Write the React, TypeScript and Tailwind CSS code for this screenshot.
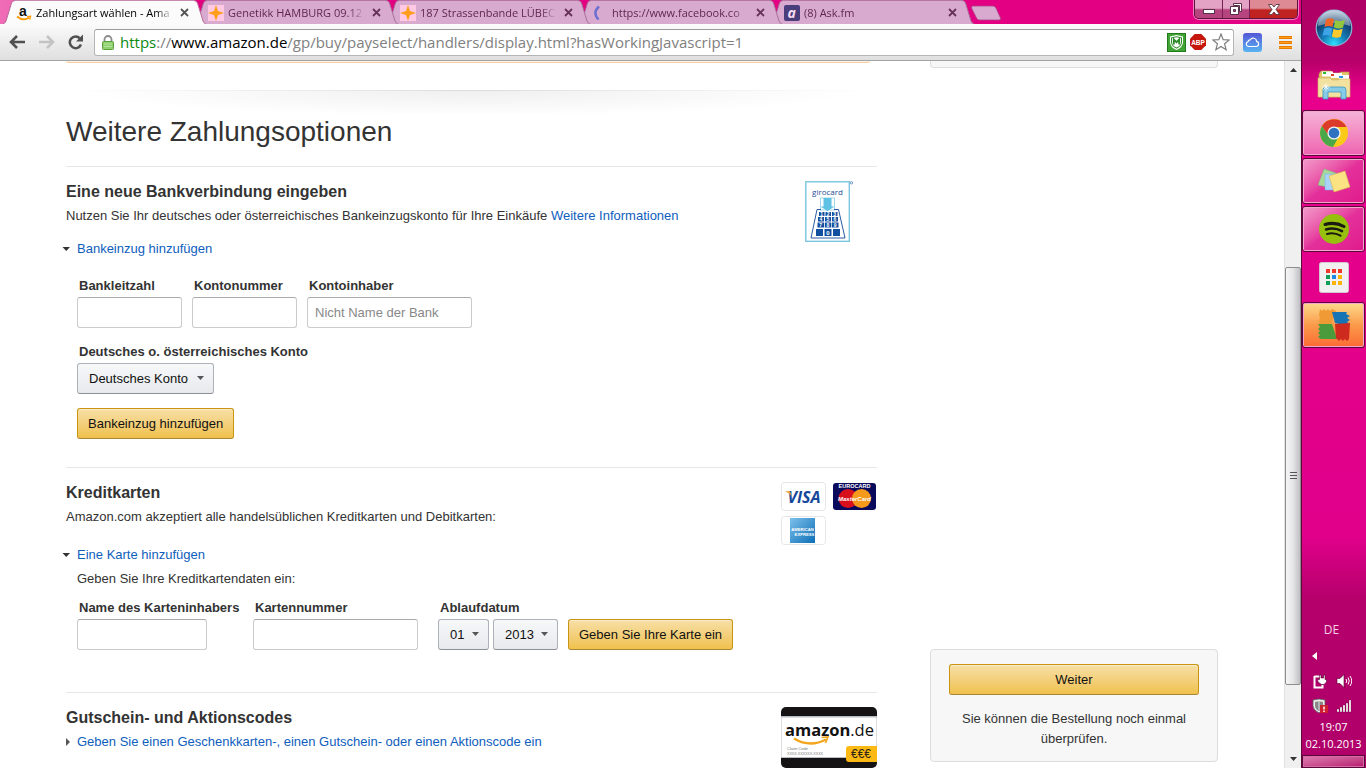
import React from 'react'

type TabItem = {
  title: string
  icon: React.ReactNode
  layer: string
  active?: boolean
}

const GOLD_BUTTON =
  'h-[31px] rounded-[3px] border border-[#c89411] border-b-[#a88734] bg-linear-to-b from-[#f7dfa5] to-[#f0c14b] px-[10px] text-[13px] text-[#111] shadow-[inset_0_1px_0_rgba(255,255,255,0.4)]'

const INPUT =
  'h-[31px] rounded-[3px] border border-[#ccc] border-t-[#aaa] bg-white px-[7px] text-[13px] text-[#333] outline-none placeholder:text-[#888]'

/* ---------- Browser ---------- */

const StarFavicon = () => (
  <svg viewBox="0 0 16 16" className="size-4 shrink-0 bg-[#ffc9e4]">
    <path d="M8 0 10 6 16 8 10 10 8 16 6 10 0 8 6 6Z" fill="#ff9e1b" />
  </svg>
)

const AmazonFavicon = () => (
  <svg viewBox="0 0 16 16" className="size-4 shrink-0 overflow-visible">
    <text x="3" y="10.500" fontSize="14" fontWeight="700" fontFamily="Liberation Sans, sans-serif" fill="#111">
      a
    </text>
    <path d="M1 11.5Q7 16.5 13 12.8" fill="none" stroke="#ff9900" strokeWidth="1.7" />
    <path d="M11 11.6 14.6 11.3 13.6 14.6" fill="none" stroke="#ff9900" strokeWidth="1.3" />
  </svg>
)

const LoadingFavicon = () => (
  <svg viewBox="0 0 16 16" className="size-4 shrink-0">
    <path d="M7 1.5Q0 7.500 6.500 14.500" fill="none" stroke="#6a6fd0" strokeWidth="2.400" />
  </svg>
)

const AskFavicon = () => (
  <svg viewBox="0 0 16 16" className="size-4 shrink-0 overflow-visible">
    <rect width="16" height="16" rx="2" fill="#4a3d7c" />
    <text x="3.500" y="12.500" fontSize="14" fontWeight="700" fontStyle="italic" fontFamily="Open Sans, sans-serif" fill="#f3dcec">
      a
    </text>
  </svg>
)

const tabs: TabItem[] = [
  { title: 'Zahlungsart wählen - Ama', icon: <AmazonFavicon />, layer: 'z-50', active: true },
  { title: 'Genetikk HAMBURG 09.12', icon: <StarFavicon />, layer: 'z-40' },
  { title: '187 Strassenbande LÜBEC', icon: <StarFavicon />, layer: 'z-30' },
  { title: 'https://www.facebook.co', icon: <LoadingFavicon />, layer: 'z-20' },
  { title: '(8) Ask.fm', icon: <AskFavicon />, layer: 'z-10' },
]

const TabEdge = ({ active, flip }: { active?: boolean; flip?: boolean }) => (
  <svg viewBox="0 0 12 24" className={flip ? 'h-6 w-3 shrink-0 -scale-x-100' : 'h-6 w-3 shrink-0'}>
    <path d="M0 24Q2 23.500 3 21L8.500 3Q9.500 .5 12 .5V24Z" fill={active ? '#fbfbfb' : '#d9aad0'} />
    <path d="M0 24Q2 23.500 3 21L8.500 3Q9.500 .5 12 .5" fill="none" stroke={active ? '#b9699a' : '#a8709a'} />
  </svg>
)

const Tab = ({ title, icon, layer, active }: TabItem) => (
  <div className={`relative -ml-[11px] flex h-6 ${layer}`}>
    <TabEdge active={active} />
    <div
      className={`flex w-[179px] items-center border-t pr-[5px] pl-px ${
        active ? 'border-[#c98ab0] bg-[#fbfbfb] text-black' : 'border-[#b676a4] bg-[#d9aad0] text-[#5f2750]'
      }`}
    >
      {icon}
      <span className="ml-1 flex-1 text-[11px] leading-5 whitespace-nowrap [mask-image:linear-gradient(to_right,black_88%,transparent)]">
        {title}
      </span>
      <button aria-label="Tab schließen" className="ml-[7px]">
        <svg viewBox="0 0 9 9" className="size-[9px]">
          <path d="M1 1 8 8M8 1 1 8" stroke={active ? '#555' : '#68315a'} strokeWidth="1.800" />
        </svg>
      </button>
    </div>
    <TabEdge active={active} flip />
  </div>
)

const WindowControls = () => (
  <div className="mr-[3px] flex h-[19px] overflow-hidden rounded-b-[5px] border border-t-0 border-[#5d1540] shadow-[0_0_0_1px_#f27fbd]">
    <button
      aria-label="Minimieren"
      className="flex w-7 items-center justify-center border-r border-[#7a1f55] bg-linear-to-b from-[#e3a3c5] from-45% to-[#b5447f] to-55%"
    >
      <svg viewBox="0 0 12 5" className="mt-1 h-[5px] w-3">
        <rect x=".5" y=".5" width="11" height="4" fill="#fff" stroke="#55324a" />
      </svg>
    </button>
    <button
      aria-label="Verkleinern"
      className="flex w-[27px] items-center justify-center border-r border-[#7a1f55] bg-linear-to-b from-[#e3a3c5] from-45% to-[#b5447f] to-55%"
    >
      <svg viewBox="0 0 12 12" className="size-3">
        <path d="M3.500 .5h8v8h-2v-6h-6z" fill="#fff" stroke="#55324a" />
        <path d="M.5 3.500h8v8h-8zM3.500 6.500v2h2v-2z" fill="#fff" fillRule="evenodd" stroke="#55324a" />
      </svg>
    </button>
    <button
      aria-label="Schließen"
      className="flex w-[47px] items-center justify-center bg-linear-to-b from-[#dd8a94] from-45% to-[#c02222] to-55%"
    >
      <svg viewBox="0 0 12 11" className="h-[11px] w-3">
        <path
          d="M.5 .5h3.500L6 3 8 .5h3.500L8 5.500l3.500 5H8L6 8l-2 2.500H.5l3.500-5z"
          fill="#fff"
          stroke="#5a3a44"
          strokeWidth=".9"
        />
      </svg>
    </button>
  </div>
)

const TabStrip = () => (
  <header className="flex h-6 items-start bg-linear-to-r from-[#f06cb6] via-[#e2007f] via-15% to-[#e40084] pl-[14px]">
    {tabs.map((tab) => (
      <Tab key={tab.title} {...tab} />
    ))}
    <button aria-label="Neuer Tab" className="mt-[5px] -ml-1">
      <svg viewBox="0 0 32 16" className="h-4 w-8">
        <path
          d="M3 1H23Q25 1 26 3L30.500 13Q31 15 29 15H9Q7.500 15 6.500 13L1.500 3Q1 1 3 1Z"
          fill="#d9aad0"
          stroke="#a84385"
          strokeWidth=".8"
        />
      </svg>
    </button>
    <div className="flex-1" />
    <WindowControls />
  </header>
)

const Toolbar = () => (
  <div className="flex h-[37px] items-center border-b border-[#a3a3a3] bg-linear-to-b from-[#fbfbfb] to-[#dfdfdf] pl-[9px]">
    <button aria-label="Zurück">
      <svg viewBox="0 0 16 14" className="h-[14px] w-4">
        <path d="M8 1 2 7l6 6M2.500 7H16" fill="none" stroke="#505050" strokeWidth="2.600" />
      </svg>
    </button>
    <button aria-label="Vorwärts" className="ml-[14px]">
      <svg viewBox="0 0 16 14" className="h-[14px] w-4">
        <path d="M8 1l6 6-6 6M13.500 7H0" fill="none" stroke="#c3c3c3" strokeWidth="2.600" />
      </svg>
    </button>
    <button aria-label="Neu laden" className="ml-3">
      <svg viewBox="0 0 17 16" className="h-4 w-[17px]">
        <path d="M13 4.500A5.800 5.800 0 1 0 14 10.500" fill="none" stroke="#505050" strokeWidth="2.500" />
        <path d="M16 .5V7.500H9Z" fill="#505050" />
      </svg>
    </button>
    <div className="ml-[10px] flex h-[27px] flex-1 items-center rounded-[3px] border border-[#b5b5b5] border-t-[#9a9a9a] bg-white pr-[3px] pl-[7px]">
      <svg viewBox="0 0 12 15" className="h-[15px] w-3">
        <path d="M2.500 7V4.500a3.500 3.500 0 0 1 7 0V7" fill="none" stroke="#8b8b8b" strokeWidth="1.800" />
        <rect x=".5" y="6.500" width="11" height="8" rx="1" fill="#8fd06f" stroke="#5ba03c" />
        <path d="M2 9h8M2 11.500h8" stroke="#b5e39c" />
      </svg>
      <span className="ml-[6px] flex-1 text-[15px] leading-6 whitespace-nowrap text-[#808080]">
        <span className="text-[#0b8a12]">https</span>://<span className="text-black">www.amazon.de</span>
        /gp/buy/payselect/handlers/display.html?hasWorkingJavascript=1
      </span>
      <svg viewBox="0 0 19 19" className="size-[19px]">
        <rect x=".5" y=".5" width="18" height="18" fill="#41a535" stroke="#237a1c" />
        <path d="M9.500 2 16 3.500V9q0 5-6.500 8Q3 14 3 9V3.500Z" fill="#fff" />
        <path d="M9.500 3.200 15 4.500V9q0 4.200-5.500 6.700Q4 13.200 4 9V4.500Z" fill="#2d8a28" />
        <path d="M9.500 4.200 14 5.300V9q0 3.500-4.500 5.600Q5 12.500 5 9V5.300Z" fill="#fff" />
        <path d="M6.800 11.500V6.500L9.500 9.200l2.700-2.700v5" fill="none" stroke="#2d8a28" strokeWidth="1.800" />
      </svg>
      <svg viewBox="0 0 16 16" className="ml-1 size-4">
        <path d="M4.700 0h6.600L16 4.700v6.600L11.300 16H4.700L0 11.300V4.700Z" fill="#c6170d" />
        <text x="8" y="10.800" fontSize="6.500" fontWeight="700" textAnchor="middle" fontFamily="Liberation Sans, sans-serif" fill="#fff">
          ABP
        </text>
      </svg>
      <button aria-label="Lesezeichen" className="ml-[6px]">
        <svg viewBox="0 0 18 18" className="size-[18px]">
          <path
            d="M9 1 11.200 6.600 17.200 7 12.600 10.800 14.100 16.700 9 13.400 3.900 16.700 5.400 10.800 .8 7 6.800 6.600Z"
            fill="#fff"
            stroke="#7d7d7d"
            strokeWidth="1.200"
          />
        </svg>
      </button>
    </div>
    <svg viewBox="0 0 19 19" className="ml-[9px] size-[19px]">
      <defs>
        <linearGradient id="cloud" x2="0" y2="1">
          <stop stopColor="#5457d6" />
          <stop offset="1" stopColor="#58b4f2" />
        </linearGradient>
      </defs>
      <rect width="19" height="19" rx="3" fill="url(#cloud)" />
      <path
        d="M5.500 13.500a2.500 2.500 0 0 1-.4-4.900 2 2 0 0 1 2.200-1.800 3.400 3.400 0 0 1 6.300 1.500 2.700 2.700 0 0 1 .2 5.200Z"
        fill="none"
        stroke="#fff"
        strokeWidth="1.200"
      />
    </svg>
    <button aria-label="Menü" className="mr-[9px] ml-[17px]">
      <svg viewBox="0 0 13 13" className="size-[13px]">
        <path d="M0 1.500h13M0 6.500h13M0 11.500h13" stroke="#e87a00" strokeWidth="3" />
        <path d="M0 1.500h13M0 6.500h13M0 11.500h13" stroke="#ff9f1a" />
      </svg>
    </button>
  </div>
)

const Scrollbar = () => (
  <div className="flex w-[17px] shrink-0 flex-col items-center border-l border-[#e2e2e2] bg-[#f0f0f0]">
    <svg viewBox="0 0 7 4" className="my-[7px] h-1 w-[7px]">
      <path d="M0 4 3.500 0 7 4Z" fill="#333" />
    </svg>
    <div className="flex-[189]" />
    <div className="flex w-full flex-[419] items-center justify-center rounded-[2px] border border-[#8e8e8e] bg-linear-to-r from-[#f5f5f5] via-[#e6e6e8] to-[#bfbfc4]">
      <svg viewBox="0 0 7 8" className="h-2 w-[7px]">
        <path d="M0 .5h7M0 3.500h7M0 6.500h7" stroke="#555" />
      </svg>
    </div>
    <div className="flex-[65]" />
    <svg viewBox="0 0 7 4" className="my-[7px] h-1 w-[7px]">
      <path d="M0 0H7L3.500 4Z" fill="#333" />
    </svg>
  </div>
)

/* ---------- Formular ---------- */

const Field = ({
  id,
  label,
  width,
  column = '',
  placeholder,
}: {
  id: string
  label: string
  width: string
  column?: string
  placeholder?: string
}) => (
  <div className={`flex flex-col ${column}`}>
    <label htmlFor={id} className="mb-px pl-0.5 font-bold whitespace-nowrap">
      {label}
    </label>
    <input id={id} type="text" placeholder={placeholder} className={`${INPUT} ${width}`} />
  </div>
)

const Select = ({
  id,
  width,
  options,
  label,
}: {
  id: string
  width: string
  options: string[]
  label?: string
}) => (
  <div className={`relative ${width}`}>
    <select
      id={id}
      aria-label={label}
      className="h-[31px] w-full appearance-none rounded-[3px] border border-[#adb1b8] border-b-[#8d9096] bg-linear-to-b from-[#f7f8fa] to-[#e7e9ec] pl-[11px] text-[13px] text-[#111]"
    >
      {options.map((option) => (
        <option key={option}>{option}</option>
      ))}
    </select>
    <svg viewBox="0 0 7 4" className="pointer-events-none absolute top-[13px] right-[10px] h-1 w-[7px]">
      <path d="M0 0H7L3.500 4Z" fill="#555" />
    </svg>
  </div>
)

const Expander = ({ open, className = '', children }: { open?: boolean; className?: string; children: string }) => (
  <div className={`-ml-1 flex items-center ${className}`}>
    <span className="flex w-[15px] items-center">
      <svg viewBox="0 0 8 8" className="size-2">
        {open ? <path d="M.5 2H8L4.250 6Z" fill="#333" /> : <path d="M4 0V8L8 4Z" fill="#555" />}
      </svg>
    </span>
    <a href="#" className="text-[#0e5ebd]">
      {children}
    </a>
  </div>
)

const Section = ({
  title,
  media,
  className = '',
  children,
}: {
  title: string
  media: React.ReactNode
  className?: string
  children: React.ReactNode
}) => (
  <section className={`flex items-start border-t border-[#e7e7e7] pt-3 ${className}`}>
    <div className="min-w-0 flex-1">
      <h2 className="text-[16px] leading-[26px] font-bold">{title}</h2>
      <div className="mt-px">{children}</div>
    </div>
    {media}
  </section>
)

/* ---------- Kartenlogos ---------- */

const Girocard = () => (
  <svg viewBox="0 0 48 62" className="mt-0.5 mr-6 h-[62px] w-12 shrink-0">
    <rect x=".8" y=".8" width="43.500" height="59.500" fill="#fff" stroke="#7cc6e0" strokeWidth="1.400" />
    <circle cx="46.500" cy="1.800" r="1.200" fill="none" stroke="#4a7fb5" strokeWidth=".8" />
    <text x="22.500" y="13.500" fontSize="8" textAnchor="middle" fontFamily="Open Sans, sans-serif" fill="#1b4b96">
      girocard
    </text>
    <rect x="15.500" y="17" width="14" height="12" fill="#fff" stroke="#a3d8ea" />
    <path d="M18.500 17h8v8.500h3L22.500 30l-7-4.500h3Z" fill="#5fc1e4" />
    <path d="M16 28.500H12L6 57H40L33.500 28.500H29" fill="none" stroke="#2a5ca3" />
    <g fill="#124f9f">
      {[14, 20.5, 27].map((x) => (
        <rect key={x} x={x} y="31" width="5.500" height="4" />
      ))}
      {[13, 20, 27].map((x) => (
        <rect key={x} x={x} y="36" width="6" height="4.500" />
      ))}
      {[12.5, 19.8, 27].map((x) => (
        <rect key={x} x={x} y="41.500" width="6.500" height="5" />
      ))}
      {[11, 19.5, 28].map((x) => (
        <rect key={x} x={x} y="48" width="7" height="7" />
      ))}
    </g>
    <g fill="#fff" fontSize="5" fontWeight="700" textAnchor="middle" fontFamily="Liberation Sans, sans-serif">
      <text x="16.700" y="34.900">1</text>
      <text x="23.200" y="34.900">2</text>
      <text x="29.700" y="34.900">3</text>
      <text x="16" y="40.100">4</text>
      <text x="23" y="40.100">5</text>
      <text x="30" y="40.100">6</text>
      <text x="15.700" y="45.800">7</text>
      <text x="23" y="45.800">8</text>
      <text x="30.200" y="45.800">9</text>
      <text x="23" y="53.600" fontSize="6">0</text>
    </g>
  </svg>
)

const CreditCards = () => (
  <div className="mt-0.5 grid w-24 shrink-0 grid-cols-2 gap-x-[6px] gap-y-[5px]">
    <svg viewBox="0 0 45 29" className="h-[29px] w-[45px]">
      <rect x=".5" y=".5" width="44" height="28" rx="3" fill="#fff" stroke="#e6e6e6" />
      <text x="23" y="20.500" fontSize="16" fontWeight="700" fontStyle="italic" textAnchor="middle" fontFamily="Open Sans, sans-serif" fill="#15479b">
        VISA
      </text>
      <path d="M4 9.300H9L11 15Q8.500 11 4 9.300Z" fill="#f2a12c" />
    </svg>
    <svg viewBox="0 0 45 29" className="h-[29px] w-[45px]">
      <rect x="1" y="1" width="43" height="27" rx="3" fill="#0a0a5c" />
      <text x="22.500" y="6.300" fontSize="5.500" fontWeight="700" textAnchor="middle" fontFamily="Liberation Sans, sans-serif" fill="#fff">
        EUROCARD
      </text>
      <circle cx="16" cy="16.500" r="9.500" fill="#d8101c" />
      <circle cx="29.500" cy="16.500" r="9.500" fill="#f59a1b" />
      <text x="22.500" y="19" fontSize="6" fontWeight="700" fontStyle="italic" textAnchor="middle" fontFamily="Liberation Sans, sans-serif" fill="#fff">
        MasterCard
      </text>
    </svg>
    <svg viewBox="0 0 45 29" className="h-[29px] w-[45px]">
      <defs>
        <linearGradient id="amex" x2="1" y2="1">
          <stop stopColor="#7cc0ea" />
          <stop offset="1" stopColor="#0d6fb8" />
        </linearGradient>
      </defs>
      <rect x=".5" y=".5" width="44" height="28" rx="3" fill="#fff" stroke="#e6e6e6" />
      <rect x="9" y="2" width="25" height="25" fill="url(#amex)" />
      <g fill="#fff" fontSize="4.200" fontWeight="700" textAnchor="middle" fontFamily="Liberation Sans, sans-serif">
        <text x="21.500" y="14.500">AMERICAN</text>
        <text x="23.500" y="20">EXPRESS</text>
      </g>
    </svg>
  </div>
)

const GiftCard = () => (
  <svg viewBox="0 0 96 61" className="mt-0.5 h-[61px] w-24 shrink-0">
    <rect width="96" height="61" rx="5" fill="#161314" />
    <path d="M0 9H96V51H0Z" fill="#b9bdc4" />
    <path d="M.5 10.500H95.500V50H.5Z" fill="#fff" />
    <text x="4" y="29" fontSize="16.500" fontWeight="700" fontFamily="Open Sans, sans-serif" fill="#111">
      amazon<tspan fontWeight="400">.de</tspan>
    </text>
    <path d="M13 31.500Q29 41 45 32.500" fill="none" stroke="#f3a51b" strokeWidth="2.400" />
    <path d="M40.500 30.500 47 30 44.500 36" fill="none" stroke="#f3a51b" strokeWidth="1.600" />
    <g fill="#777" fontFamily="Liberation Sans, sans-serif">
      <text x="6" y="43" fontSize="4">Claim Code</text>
      <text x="6" y="48" fontSize="3.600">XXXX-XXXXXX-XXXX</text>
    </g>
    <path d="M68 39H96V55H68Q65 55 65 52V42Q65 39 68 39Z" fill="#fdb913" />
    <text x="80" y="50.500" fontSize="12" textAnchor="middle" fontFamily="Liberation Sans, sans-serif" fill="#2b2415">
      €€€
    </text>
  </svg>
)

const PaymentPage = () => (
  <main className="flex min-w-0 flex-1 gap-[53px] overflow-hidden bg-white pr-[66px] pl-[66px] font-['Liberation_Sans',Arial,sans-serif] text-[13px] leading-5 text-[#333]">
    <div className="min-w-0 flex-1">
      <div className="mr-[7px] h-0.5 rounded-b border-b border-[#f5cfa0] bg-[#fdf3e6]" />
      <div className="mt-[27px] h-[26px] bg-[radial-gradient(ellipse_48%_100%_at_50%_0%,#efefef,#fff)]">
        <div className="h-px bg-linear-to-r from-white via-[#dcdcdc] to-white" />
      </div>
      <h1 className="pb-[18px] text-[28px] leading-8">Weitere Zahlungsoptionen</h1>

      <Section title="Eine neue Bankverbindung eingeben" media={<Girocard />} className="pb-7">
        <p>
          Nutzen Sie Ihr deutsches oder österreichisches Bankeinzugskonto für Ihre Einkäufe{' '}
          <a href="#" className="text-[#0e5ebd]">
            Weitere Informationen
          </a>
        </p>
        <Expander open className="mt-[13px]">
          Bankeinzug hinzufügen
        </Expander>
        <form className="mt-[17px] pl-[11px]">
          <div className="flex gap-[10px]">
            <Field id="blz" label="Bankleitzahl" width="w-[105px]" />
            <Field id="konto" label="Kontonummer" width="w-[105px]" />
            <Field id="inhaber" label="Kontoinhaber" width="w-[165px]" placeholder="Nicht Name der Bank" />
          </div>
          <label htmlFor="land" className="mt-[14px] mb-px block pl-0.5 font-bold">
            Deutsches o. österreichisches Konto
          </label>
          <Select id="land" width="w-[137px]" options={['Deutsches Konto', 'Österreichisches Konto']} />
          <button type="button" className={`mt-[14px] block ${GOLD_BUTTON}`}>
            Bankeinzug hinzufügen
          </button>
        </form>
      </Section>

      <Section title="Kreditkarten" media={<CreditCards />} className="pb-[42px]">
        <p>Amazon.com akzeptiert alle handelsüblichen Kreditkarten und Debitkarten:</p>
        <Expander open className="mt-[18px]">
          Eine Karte hinzufügen
        </Expander>
        <form className="mt-1 pl-[11px]">
          <p>Geben Sie Ihre Kreditkartendaten ein:</p>
          <div className="mt-[9px] flex items-end">
            <Field id="name" label="Name des Karteninhabers" width="w-[130px]" column="mr-[10px] w-[166px]" />
            <Field id="nummer" label="Kartennummer" width="w-[165px]" column="mr-5" />
            <fieldset>
              <legend className="mb-px pl-0.5 font-bold">Ablaufdatum</legend>
              <div className="flex gap-1">
                <Select id="monat" label="Monat" width="w-[51px]" options={['01', '02', '03', '04', '05', '06']} />
                <Select id="jahr" label="Jahr" width="w-[65px]" options={['2013', '2014', '2015', '2016']} />
              </div>
            </fieldset>
            <button type="button" className={`ml-[10px] ${GOLD_BUTTON}`}>
              Geben Sie Ihre Karte ein
            </button>
          </div>
        </form>
      </Section>

      <Section title="Gutschein- und Aktionscodes" media={<GiftCard />}>
        <Expander>Geben Sie einen Geschenkkarten-, einen Gutschein- oder einen Aktionscode ein</Expander>
      </Section>
    </div>

    <aside className="flex w-72 shrink-0 flex-col justify-between pb-[6px]">
      <div className="h-[7px] rounded-b border border-t-0 border-[#ddd] bg-[#f7f7f7]" />
      <div className="rounded border border-[#ddd] bg-[#f7f7f7] px-[18px] pt-[14px] pb-3 text-center">
        <button className={`w-full ${GOLD_BUTTON}`}>Weiter</button>
        <p className="mt-[14px]">Sie können die Bestellung noch einmal überprüfen.</p>
      </div>
    </aside>
  </main>
)

/* ---------- Taskleiste ---------- */

const StartOrb = () => (
  <svg viewBox="0 0 38 38" className="size-[38px]">
    <defs>
      <radialGradient id="orb" cx=".5" cy=".95" r=".9">
        <stop stopColor="#2fe0ff" />
        <stop offset=".4" stopColor="#1478b4" />
        <stop offset=".75" stopColor="#123f6e" />
        <stop offset="1" stopColor="#8fa9c2" />
      </radialGradient>
    </defs>
    <circle cx="19" cy="19" r="17.800" fill="url(#orb)" stroke="#8ab4cf" strokeWidth="1.200" />
    <path d="M3 17A16 16 0 0 1 35 17Q19 11 3 17Z" fill="#fff" opacity=".4" />
    <path d="M11 10.500Q15 8 19 10.500L17.500 18Q13.500 16 9.500 18Z" fill="#f0652a" />
    <path d="M20.300 11Q25 13.500 30 10.500L28 18.500Q23.500 20.500 18.800 18.200Z" fill="#93c83e" />
    <path d="M9.200 19.500Q13.500 17.500 17.200 19.500L15.700 27Q11.500 25 7.500 27Z" fill="#3ea4e8" />
    <path d="M18.500 19.700Q23 22 27.700 19.800L25.800 27.800Q21.500 30 16.900 27.500Z" fill="#fcc92c" />
  </svg>
)

const ExplorerIcon = () => (
  <svg viewBox="0 0 34 30" className="h-[30px] w-[34px]">
    <path d="M2 4 4 1H14L16 3H22L24 2H32V27H2Z" fill="#e0c468" stroke="#b99a4a" strokeWidth=".7" />
    <path d="M5 1.500h11v5H5zM14 3h11v5H14zM22 5h10v4H22z" fill="#fff" />
    <rect x="6" y="2" width="3" height="2" fill="#2db82d" />
    <rect x="14" y="4" width="3" height="2" fill="#d9441f" />
    <rect x="22" y="6" width="4" height="2" fill="#2b93e0" />
    <path d="M1 8H13L15 10H21L23 9H33V27H1Z" fill="#f3e1a0" stroke="#cdb266" strokeWidth=".6" />
    <path d="M6 29V20Q6 17 9 17H26Q29 17 29 20V29H24V22H11V29Z" fill="#86cbe8" stroke="#3b98c2" strokeWidth=".8" />
    <path d="M9 13v8M5 17h8M6.500 14.500l5 5M11.500 14.500l-5 5" stroke="#fff" strokeWidth=".8" />
  </svg>
)

const ChromeIcon = () => (
  <svg viewBox="0 0 30 30" className="size-[30px]">
    <circle cx="15" cy="15" r="14" fill="#fbc918" />
    <path d="M15 9H27.500A14 14 0 0 0 2.900 8L9.500 18Z" fill="#dc3b2c" />
    <path d="M2.900 8A14 14 0 0 0 14 29L20.200 18 15 15 9.800 18Z" fill="#4aa84a" />
    <circle cx="15" cy="15" r="6.600" fill="#f4f4f4" />
    <circle cx="15" cy="15" r="5.300" fill="#2f72c0" />
  </svg>
)

const NotesIcon = () => (
  <svg viewBox="0 0 32 26" className="h-[26px] w-8">
    <path d="M6 1 18 5 13 20 0 17Z" fill="#a6d99a" stroke="#7db674" strokeWidth=".5" />
    <path d="M7 6H21V22H7Z" fill="#a9d4f7" stroke="#74aee0" strokeWidth=".5" />
    <path d="M11 8 27 3 32 19 16 24Z" fill="#fbe384" stroke="#d9b750" strokeWidth=".6" />
  </svg>
)

const SpotifyIcon = () => (
  <svg viewBox="0 0 30 30" className="size-[30px]">
    <circle cx="15" cy="15" r="15" fill="#97bf0d" />
    <g fill="none" stroke="#1a1a10" strokeLinecap="round">
      <path d="M6 10.500Q16 7.500 25 12.500" strokeWidth="3" />
      <path d="M7 15.500Q15.500 13 23 17.200" strokeWidth="2.500" />
      <path d="M8 20Q15 18 21.500 21.700" strokeWidth="2" />
    </g>
  </svg>
)

const AppsIcon = () => (
  <svg viewBox="0 0 30 31" className="h-[31px] w-[30px]">
    <rect x=".5" y=".5" width="29" height="30" rx="2" fill="#f1f1f1" stroke="#d5c6cf" />
    <path d="M7 7h4v4H7zM13 7h4v4h-4zM19 7h4v4h-4z" fill="#f0392c" />
    <path d="M7 13h4v4H7z" fill="#0f9d58" />
    <path d="M13 13h4v4h-4z" fill="#1e88e5" />
    <path d="M19 13h4v4h-4zM13 19h4v4h-4zM19 19h4v4h-4z" fill="#fbb40b" />
    <path d="M7 19h4v4H7z" fill="#0f9d58" />
  </svg>
)

const AvgIcon = () => (
  <svg viewBox="0 0 32 32" className="size-8">
    <path d="M2 0 4 2 6 0 8 2 10 0 12 2 14 0 18 2 13 15H2L1 12 2 9 1 6Z" fill="#ef9a35" />
    <path d="M14 3H29L28 5 32 7 29 9 32 11 29 13 32 15 29 17 17 14Z" fill="#1673b4" />
    <path d="M0 15H14L19 30H3L0 28 2 26 0 24 2 22 0 20 2 18Z" fill="#4b9a3b" />
    <path d="M17 15 32 14 31 30 29 32 27 30 25 32 23 30 21 32 18 29Z" fill="#cf2a1e" />
  </svg>
)

const FRAME = 'rounded-[3px] border border-[#5a0a38] inset-ring inset-ring-[#f7a3cf]'

const apps = [
  { name: 'Explorer', icon: <ExplorerIcon />, style: '' },
  { name: 'Chrome', icon: <ChromeIcon />, style: `${FRAME} bg-linear-to-b from-[#f4b3d8] to-[#ee62b0]` },
  { name: 'Kurznotizen', icon: <NotesIcon />, style: `${FRAME} bg-linear-to-br from-[#f19acb] via-[#e4309b] to-[#e0198c]` },
  { name: 'Spotify', icon: <SpotifyIcon />, style: `${FRAME} bg-linear-to-br from-[#f19acb] via-[#e4309b] to-[#e0198c]` },
  { name: 'Apps', icon: <AppsIcon />, style: '' },
  { name: 'AVG', icon: <AvgIcon />, style: `${FRAME} bg-linear-to-b from-[#fbd98a] via-[#fb9a4a] to-[#fb6a34]` },
]

const Taskbar = () => (
  <nav className="flex w-16 shrink-0 flex-col bg-[linear-gradient(#ad0064,#b80069_8%,#e8008c_12%,#e0008a_70%,#b5006b_78%,#b0006a)] pr-px text-[11px] text-white">
    <button aria-label="Start" className="flex h-[62px] items-center justify-center pb-[7px]">
      <StartOrb />
    </button>
    <div className="flex flex-col gap-0.5">
      {apps.map((app) => (
        <button key={app.name} aria-label={app.name} className={`flex h-[46px] items-center justify-center ${app.style}`}>
          {app.icon}
        </button>
      ))}
    </div>
    <div className="flex-1" />
    <div className="flex flex-col items-center">
      <span className="mr-1 text-[12px] leading-5 text-[#f6cfe4]">DE</span>
      <button aria-label="Ausgeblendete Symbole" className="mt-3 mb-[13px] self-start pl-[10px]">
        <svg viewBox="0 0 5 8" className="h-2 w-[5px]">
          <path d="M5 0V8L0 4Z" fill="#fff" />
        </svg>
      </button>
      <div className="mb-[9px] flex items-center gap-2 pr-1">
        <svg viewBox="0 0 16 16" className="size-4">
          <path d="M2.500 3.500h6M2.500 3v11.500h8V12" fill="none" stroke="#fff" strokeWidth="2" />
          <path d="M5.500 6.500h2V2H9v3h2.500V2H13v4.500h1.500V9L12 11.500H9.500L6 9Z" fill="#fff" stroke="#50002f" strokeWidth=".6" />
        </svg>
        <svg viewBox="0 0 16 16" className="size-4">
          <path d="M1 5.500h3L8 1.500v13L4 10.500H1Z" fill="#fff" stroke="#50002f" strokeWidth=".6" />
          <path d="M10 6q1.500 2 0 4M12 4.500q2.500 3.500 0 7M14 3q3.500 5 0 10" fill="none" stroke="#fff" />
        </svg>
      </div>
      <div className="flex items-center gap-2 pr-1">
        <svg viewBox="0 0 16 16" className="size-4">
          <path d="M1 2Q7 0 13 2V8Q12 12 7 15Q1 12 1 8Z" fill="#eee" stroke="#555" strokeWidth=".8" />
          <path d="M3 4Q7 2.500 11 4V8Q10 11 7 13Q3 11 3 8Z" fill="#888" />
          <path d="M7 3V12" stroke="#ddd" />
          <rect x="8" y="7" width="8" height="8" fill="#cf1e2e" />
          <path d="M12 8.500v3M12 12.500v1.500" stroke="#fff" strokeWidth="1.500" />
        </svg>
        <svg viewBox="0 0 16 16" className="size-4">
          <path d="M1 11h2v3H1zM4 9h2v5H4zM7 7h2v7H7zM10 5h2v9h-2zM13 2h2v12h-2z" fill="#fff" stroke="#50002f" strokeWidth=".3" />
        </svg>
      </div>
      <span className="mt-1 leading-[17px]">19:07</span>
      <span className="leading-[17px]">02.10.2013</span>
    </div>
    <button
      aria-label="Desktop anzeigen"
      className="mt-[3px] h-[13px] border border-[#5a0a38] bg-linear-to-br from-[#dd7db4] to-[#b5106f] inset-ring inset-ring-[#d968a8]"
    />
  </nav>
)

export default function App() {
  return (
    <div className="flex h-screen overflow-hidden font-['Open_Sans',sans-serif]">
      <div className="flex min-w-0 flex-1 flex-col border-r border-[#5a0a38]">
        <TabStrip />
        <Toolbar />
        <div className="flex min-h-0 flex-1">
          <PaymentPage />
          <Scrollbar />
        </div>
      </div>
      <Taskbar />
    </div>
  )
}
